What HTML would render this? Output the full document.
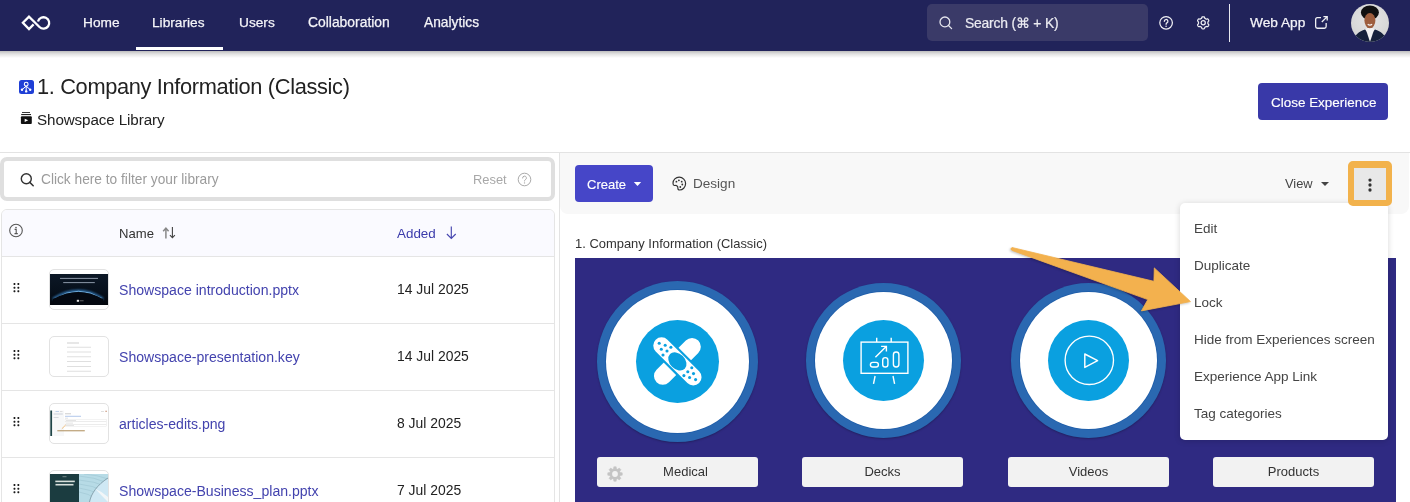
<!DOCTYPE html>
<html><head><meta charset="utf-8"><style>
html,body{margin:0;padding:0;}
body{width:1410px;height:502px;overflow:hidden;position:relative;background:#fff;font-family:"Liberation Sans",sans-serif;}
.t{position:absolute;white-space:nowrap;line-height:1;will-change:transform;}
</style></head><body>
<div style="position:absolute;left:0px;top:0px;width:1410px;height:51px;background:#21235a;"></div>
<div style="position:absolute;left:0px;top:51px;width:1410px;height:7px;background:linear-gradient(rgba(0,0,0,0.26),rgba(0,0,0,0.12) 40%,rgba(0,0,0,0));"></div>
<svg style="position:absolute;left:0px;top:0px;" width="60" height="50" viewBox="0 0 60 50"><path d="M33.6,24.4 L29,29 L22.9,22.8 L29,16.6 L39.47,27.03 A5.7 5.7 0 1 0 37.99,21.52" fill="none" stroke="#fff" stroke-width="2.3" stroke-linejoin="miter"/></svg>
<div class="t" style="left:83.40px;top:16.40px;font-size:13.7px;color:#f4f4f8;-webkit-text-stroke:0.25px #f4f4f8;">Home</div>
<div class="t" style="left:152.20px;top:16.40px;font-size:13.7px;color:#f4f4f8;-webkit-text-stroke:0.25px #f4f4f8;">Libraries</div>
<div class="t" style="left:239.30px;top:16.40px;font-size:13.7px;color:#f4f4f8;-webkit-text-stroke:0.25px #f4f4f8;">Users</div>
<div class="t" style="left:308.10px;top:16.25px;font-size:13.88px;color:#f4f4f8;-webkit-text-stroke:0.25px #f4f4f8;">Collaboration</div>
<div class="t" style="left:423.60px;top:16.36px;font-size:13.75px;color:#f4f4f8;-webkit-text-stroke:0.25px #f4f4f8;">Analytics</div>
<div style="position:absolute;left:136px;top:46.8px;width:87px;height:3.5px;background:#fff;"></div>
<div style="position:absolute;left:927px;top:4.3px;width:220.6px;height:36.6px;background:#3a3a68;border-radius:5px;"></div>
<svg style="position:absolute;left:937px;top:14px;" width="18" height="18" viewBox="0 0 18 18"><circle cx="7.9" cy="7.9" r="4.9" fill="none" stroke="#e6e6ee" stroke-width="1.3"/><line x1="11.5" y1="11.5" x2="14.6" y2="14.6" stroke="#e6e6ee" stroke-width="1.3" stroke-linecap="round"/></svg>
<div class="t" style="left:964.60px;top:16.63px;font-size:13.9px;color:#ececf2;-webkit-text-stroke:0.2px #ececf2;letter-spacing:-0.2px;">Search (⌘ + K)</div>
<svg style="position:absolute;left:1157px;top:14px;" width="18" height="18" viewBox="0 0 18 18"><circle cx="9.1" cy="8.8" r="6.3" fill="none" stroke="#f0f0f4" stroke-width="1.25"/><path d="M7.3,7.3 A1.8 1.8 0 1 1 9.9,8.9 C9.3,9.2 9.1,9.6 9.1,10.3" fill="none" stroke="#f0f0f4" stroke-width="1.25" stroke-linecap="round"/><circle cx="9.1" cy="12.2" r="0.8" fill="#f0f0f4"/></svg>
<svg style="position:absolute;left:1194px;top:14px;" width="18" height="18" viewBox="0 0 18 18"><path d="M9.20,2.75 L9.36,2.75 L9.52,2.76 L9.67,2.78 L9.83,2.80 L9.99,2.83 L10.14,2.89 L10.28,2.98 L10.41,3.12 L10.51,3.33 L10.59,3.61 L10.66,3.88 L10.73,4.10 L10.81,4.25 L10.91,4.35 L11.01,4.43 L11.12,4.49 L11.23,4.55 L11.34,4.61 L11.44,4.67 L11.55,4.73 L11.66,4.79 L11.76,4.86 L11.87,4.92 L11.97,4.98 L12.08,5.04 L12.20,5.10 L12.34,5.13 L12.51,5.13 L12.73,5.08 L13.00,5.00 L13.28,4.93 L13.52,4.91 L13.70,4.95 L13.85,5.03 L13.97,5.14 L14.08,5.25 L14.18,5.38 L14.27,5.51 L14.36,5.64 L14.44,5.78 L14.52,5.91 L14.59,6.05 L14.65,6.20 L14.71,6.35 L14.76,6.50 L14.79,6.66 L14.78,6.82 L14.72,7.01 L14.59,7.20 L14.39,7.41 L14.19,7.60 L14.03,7.77 L13.95,7.92 L13.91,8.05 L13.89,8.18 L13.89,8.31 L13.89,8.43 L13.90,8.55 L13.90,8.68 L13.90,8.80 L13.90,8.92 L13.90,9.05 L13.89,9.17 L13.89,9.29 L13.89,9.42 L13.91,9.55 L13.95,9.68 L14.03,9.83 L14.19,10.00 L14.39,10.19 L14.59,10.40 L14.72,10.59 L14.78,10.78 L14.79,10.94 L14.76,11.10 L14.71,11.25 L14.65,11.40 L14.59,11.55 L14.52,11.69 L14.44,11.82 L14.36,11.96 L14.27,12.09 L14.18,12.22 L14.08,12.35 L13.97,12.46 L13.85,12.57 L13.70,12.65 L13.52,12.69 L13.28,12.67 L13.00,12.60 L12.73,12.52 L12.51,12.47 L12.34,12.47 L12.20,12.50 L12.08,12.56 L11.97,12.62 L11.87,12.68 L11.76,12.74 L11.66,12.81 L11.55,12.87 L11.44,12.93 L11.34,12.99 L11.23,13.05 L11.12,13.11 L11.01,13.17 L10.91,13.25 L10.81,13.35 L10.73,13.50 L10.66,13.72 L10.59,13.99 L10.51,14.27 L10.41,14.48 L10.28,14.62 L10.14,14.71 L9.99,14.77 L9.83,14.80 L9.67,14.82 L9.52,14.84 L9.36,14.85 L9.20,14.85 L9.04,14.85 L8.88,14.84 L8.73,14.82 L8.57,14.80 L8.41,14.77 L8.26,14.71 L8.12,14.62 L7.99,14.48 L7.89,14.27 L7.81,13.99 L7.74,13.72 L7.67,13.50 L7.59,13.35 L7.49,13.25 L7.39,13.17 L7.28,13.11 L7.17,13.05 L7.06,12.99 L6.96,12.93 L6.85,12.87 L6.74,12.81 L6.64,12.74 L6.53,12.68 L6.43,12.62 L6.32,12.56 L6.20,12.50 L6.06,12.47 L5.89,12.47 L5.67,12.52 L5.40,12.60 L5.12,12.67 L4.88,12.69 L4.70,12.65 L4.55,12.57 L4.43,12.46 L4.32,12.35 L4.22,12.22 L4.13,12.09 L4.04,11.96 L3.96,11.83 L3.88,11.69 L3.81,11.55 L3.75,11.40 L3.69,11.25 L3.64,11.10 L3.61,10.94 L3.62,10.78 L3.68,10.59 L3.81,10.40 L4.01,10.19 L4.21,10.00 L4.37,9.83 L4.45,9.68 L4.49,9.55 L4.51,9.42 L4.51,9.29 L4.51,9.17 L4.50,9.05 L4.50,8.92 L4.50,8.80 L4.50,8.68 L4.50,8.55 L4.51,8.43 L4.51,8.31 L4.51,8.18 L4.49,8.05 L4.45,7.92 L4.37,7.77 L4.21,7.60 L4.01,7.41 L3.81,7.20 L3.68,7.01 L3.62,6.82 L3.61,6.66 L3.64,6.50 L3.69,6.35 L3.75,6.20 L3.81,6.05 L3.88,5.91 L3.96,5.78 L4.04,5.64 L4.13,5.51 L4.22,5.38 L4.32,5.25 L4.43,5.14 L4.55,5.03 L4.70,4.95 L4.88,4.91 L5.12,4.93 L5.40,5.00 L5.67,5.08 L5.89,5.13 L6.06,5.13 L6.20,5.10 L6.32,5.04 L6.43,4.98 L6.53,4.92 L6.64,4.86 L6.74,4.79 L6.85,4.73 L6.96,4.67 L7.06,4.61 L7.17,4.55 L7.28,4.49 L7.39,4.43 L7.49,4.35 L7.59,4.25 L7.67,4.10 L7.74,3.88 L7.81,3.61 L7.89,3.33 L7.99,3.12 L8.12,2.98 L8.26,2.89 L8.41,2.83 L8.57,2.80 L8.73,2.78 L8.88,2.76 L9.04,2.75Z" fill="none" stroke="#f0f0f4" stroke-width="1.25" stroke-linejoin="round"/><circle cx="9.2" cy="8.8" r="2.1" fill="none" stroke="#f0f0f4" stroke-width="1.25"/></svg>
<div style="position:absolute;left:1229px;top:4px;width:1.3px;height:38px;background:#e8e8ef;"></div>
<div class="t" style="left:1250.20px;top:16.40px;font-size:13.7px;color:#f4f4f8;-webkit-text-stroke:0.25px #f4f4f8;">Web App</div>
<svg style="position:absolute;left:1313px;top:14px;" width="18" height="18" viewBox="0 0 18 18"><path d="M8,3.65 H4.4 Q2.65,3.65 2.65,5.4 V12.5 Q2.65,14.25 4.4,14.25 H11.4 Q13.15,14.25 13.15,12.5 V9" fill="none" stroke="#f0f0f4" stroke-width="1.3"/><path d="M8.8,8 L14.2,2.6 M10.4,2.6 H14.2 V6.4" fill="none" stroke="#f0f0f4" stroke-width="1.3"/></svg>
<svg style="position:absolute;left:1351px;top:4px;" width="38" height="38" viewBox="0 0 38 38"><defs><clipPath id="av"><circle cx="19" cy="19" r="19"/></clipPath><radialGradient id="avbg" cx="50%" cy="40%" r="60%"><stop offset="0" stop-color="#e6e6e6"/><stop offset="1" stop-color="#d4d4d4"/></radialGradient></defs>
<g clip-path="url(#av)"><rect width="38" height="38" fill="url(#avbg)"/>
<ellipse cx="18.9" cy="8.6" rx="9" ry="7.2" fill="#111"/>
<rect x="16.4" y="20" width="5" height="7" fill="#8a4e33"/>
<path d="M2,39 C3,31 8,27.5 14,25.5 L19,31 L24,25.5 C30,27.5 35,31 36,39Z" fill="#16213b"/>
<path d="M14.8,25.2 L19,38 L23.2,25.2 L21.5,23.8 L16.5,23.8Z" fill="#f2f2f2"/>
<ellipse cx="18.9" cy="16.6" rx="5.5" ry="7.6" fill="#9e5e3e"/>
<path d="M13.4,12.5 C14,9 16,8.6 18.9,8.6 C21.8,8.6 23.8,9 24.4,12.5 C25.5,9 24,5 18.9,5 C13.8,5 12.3,9 13.4,12.5Z" fill="#111"/>
<path d="M16.7,20.2 Q18.9,22 21.1,20.2" stroke="#f6f2f0" stroke-width="1.2" fill="none"/>
</g></svg>
<div style="position:absolute;left:19px;top:79.5px;width:14.7px;height:14.7px;background:#1f3fd6;border-radius:2.5px;"></div>
<svg style="position:absolute;left:19px;top:79.5px;" width="15" height="15" viewBox="0 0 15 15"><circle cx="7.2" cy="4.2" r="1.9" fill="none" stroke="#fff" stroke-width="1.1"/><path d="M7.2,6.1 L3,9.7 M7.2,6.1 V11.4 M7.2,6.1 L11.2,9.7" stroke="#fff" stroke-width="1" fill="none"/><circle cx="3" cy="9.8" r="1.2" fill="#fff"/><circle cx="11.2" cy="9.8" r="1.2" fill="#fff"/><circle cx="7.2" cy="11.4" r="1.2" fill="#fff"/></svg>
<div class="t" style="left:36.80px;top:76.15px;font-size:21.8px;color:#222;letter-spacing:-0.34px;">1. Company Information (Classic)</div>
<svg style="position:absolute;left:20px;top:111px;" width="13" height="14" viewBox="0 0 13 14"><rect x="2" y="1.05" width="8" height="0.9" fill="#222"/><rect x="1.2" y="3" width="9.8" height="1.1" fill="#222"/><rect x="0.9" y="5.2" width="10.9" height="7.8" rx="1" fill="#111"/><path d="M4.7,7.7 L8.2,9.35 L4.7,11Z" fill="#fff"/></svg>
<div class="t" style="left:36.70px;top:111.83px;font-size:15.2px;color:#222;letter-spacing:-0.1px;">Showspace Library</div>
<div style="position:absolute;left:1258px;top:83px;width:130px;height:37px;background:#3939a8;border-radius:4px;"></div>
<div class="t" style="left:1270.60px;top:96.01px;font-size:13.46px;color:#fff;-webkit-text-stroke:0.15px #fff;">Close Experience</div>
<div style="position:absolute;left:0px;top:152px;width:1410px;height:1px;background:#e3e3e3;"></div>
<div style="position:absolute;left:0px;top:157px;width:555px;height:44px;box-sizing:border-box;border:4px solid #dfdfdf;border-radius:7px;background:#fff;"></div>
<svg style="position:absolute;left:18px;top:171px;" width="18" height="18" viewBox="0 0 18 18"><circle cx="8.3" cy="7.8" r="5" fill="none" stroke="#333" stroke-width="1.4"/><line x1="11.8" y1="11.4" x2="15.2" y2="14.8" stroke="#333" stroke-width="1.5" stroke-linecap="round"/></svg>
<div class="t" style="left:41.20px;top:172.88px;font-size:13.73px;color:#9b9b9b;">Click here to filter your library</div>
<div class="t" style="left:473.40px;top:173.58px;font-size:12.9px;color:#a8a8a8;">Reset</div>
<svg style="position:absolute;left:516px;top:171px;" width="17" height="17" viewBox="0 0 17 17"><circle cx="8.5" cy="8.5" r="6.3" fill="none" stroke="#aaa" stroke-width="1"/><path d="M6.6,7 A1.9 1.9 0 1 1 9.3,8.7 C8.8,9 8.5,9.4 8.5,10" fill="none" stroke="#aaa" stroke-width="1" stroke-linecap="round"/><circle cx="8.5" cy="11.9" r="0.7" fill="#aaa"/></svg>
<div style="position:absolute;left:1px;top:209px;width:554px;height:320px;box-sizing:border-box;border:1px solid #e5e5e5;border-radius:6px 6px 0 0;background:#fff;"></div>
<div style="position:absolute;left:2px;top:210px;width:552px;height:46px;background:#fafaff;border-radius:5px 5px 0 0;"></div>
<div style="position:absolute;left:1px;top:256px;width:554px;height:1px;background:#e5e5e5;"></div>
<svg style="position:absolute;left:8px;top:223px;" width="16" height="16" viewBox="0 0 16 16"><circle cx="8" cy="7.5" r="6.3" fill="none" stroke="#555" stroke-width="1.1"/><path d="M6.6,6.4 H8.2 V10.6 M6.5,10.6 H9.8" fill="none" stroke="#555" stroke-width="1.1"/><circle cx="8" cy="4.6" r="0.8" fill="#555"/></svg>
<div class="t" style="left:119.40px;top:226.91px;font-size:13.1px;color:#333;">Name</div>
<svg style="position:absolute;left:162px;top:225px;" width="16" height="16" viewBox="0 0 16 16"><path d="M3.9,13.4 V4 M1.2,6.3 L3.9,3.1 L6.6,6.3" fill="none" stroke="#888" stroke-width="1.5"/><path d="M10.4,2 V12.5 M7.9,10.1 L10.4,12.6 L12.9,10.1" fill="none" stroke="#444" stroke-width="1.1"/></svg>
<div class="t" style="left:397.40px;top:226.96px;font-size:13.4px;color:#3a3aab;">Added</div>
<svg style="position:absolute;left:443px;top:224px;" width="16" height="16" viewBox="0 0 16 16"><path d="M8.3,2.5 V14.4 M3.9,10 L8.3,14.4 L12.7,10" fill="none" stroke="#4646b0" stroke-width="1.15"/></svg>
<svg style="position:absolute;left:12.5px;top:282px;" width="8" height="13" viewBox="0 0 8 13"><rect x="0.51" y="1.01" width="1.9" height="1.9" rx="0.6" fill="#1a1a1a"/><rect x="0.51" y="4.75" width="1.9" height="1.9" rx="0.6" fill="#1a1a1a"/><rect x="0.51" y="8.25" width="1.9" height="1.9" rx="0.6" fill="#1a1a1a"/><rect x="4.40" y="1.01" width="1.9" height="1.9" rx="0.6" fill="#1a1a1a"/><rect x="4.40" y="4.75" width="1.9" height="1.9" rx="0.6" fill="#1a1a1a"/><rect x="4.40" y="8.25" width="1.9" height="1.9" rx="0.6" fill="#1a1a1a"/></svg>
<div style="position:absolute;left:49px;top:269px;width:60px;height:41px;box-sizing:border-box;border:1px solid #e2e2e2;border-radius:5px;background:#fff;overflow:hidden;"></div>
<div class="t" style="left:119.20px;top:283.08px;font-size:14.08px;color:#4343ae;">Showspace introduction.pptx</div>
<div class="t" style="left:396.80px;top:283.23px;font-size:13.9px;color:#222;">14 Jul 2025</div>
<div style="position:absolute;left:1px;top:323px;width:554px;height:1px;background:#e5e5e5;"></div>
<svg style="position:absolute;left:12.5px;top:349px;" width="8" height="13" viewBox="0 0 8 13"><rect x="0.51" y="1.01" width="1.9" height="1.9" rx="0.6" fill="#1a1a1a"/><rect x="0.51" y="4.75" width="1.9" height="1.9" rx="0.6" fill="#1a1a1a"/><rect x="0.51" y="8.25" width="1.9" height="1.9" rx="0.6" fill="#1a1a1a"/><rect x="4.40" y="1.01" width="1.9" height="1.9" rx="0.6" fill="#1a1a1a"/><rect x="4.40" y="4.75" width="1.9" height="1.9" rx="0.6" fill="#1a1a1a"/><rect x="4.40" y="8.25" width="1.9" height="1.9" rx="0.6" fill="#1a1a1a"/></svg>
<div style="position:absolute;left:49px;top:336px;width:60px;height:41px;box-sizing:border-box;border:1px solid #e2e2e2;border-radius:5px;background:#fff;overflow:hidden;"></div>
<div class="t" style="left:119.20px;top:350.08px;font-size:14.08px;color:#4343ae;">Showspace-presentation.key</div>
<div class="t" style="left:396.80px;top:350.23px;font-size:13.9px;color:#222;">14 Jul 2025</div>
<div style="position:absolute;left:1px;top:390px;width:554px;height:1px;background:#e5e5e5;"></div>
<svg style="position:absolute;left:12.5px;top:416px;" width="8" height="13" viewBox="0 0 8 13"><rect x="0.51" y="1.01" width="1.9" height="1.9" rx="0.6" fill="#1a1a1a"/><rect x="0.51" y="4.75" width="1.9" height="1.9" rx="0.6" fill="#1a1a1a"/><rect x="0.51" y="8.25" width="1.9" height="1.9" rx="0.6" fill="#1a1a1a"/><rect x="4.40" y="1.01" width="1.9" height="1.9" rx="0.6" fill="#1a1a1a"/><rect x="4.40" y="4.75" width="1.9" height="1.9" rx="0.6" fill="#1a1a1a"/><rect x="4.40" y="8.25" width="1.9" height="1.9" rx="0.6" fill="#1a1a1a"/></svg>
<div style="position:absolute;left:49px;top:403px;width:60px;height:41px;box-sizing:border-box;border:1px solid #e2e2e2;border-radius:5px;background:#fff;overflow:hidden;"></div>
<div class="t" style="left:119.20px;top:417.08px;font-size:14.08px;color:#4343ae;">articles-edits.png</div>
<div class="t" style="left:396.80px;top:417.23px;font-size:13.9px;color:#222;">8 Jul 2025</div>
<div style="position:absolute;left:1px;top:457px;width:554px;height:1px;background:#e5e5e5;"></div>
<svg style="position:absolute;left:12.5px;top:483px;" width="8" height="13" viewBox="0 0 8 13"><rect x="0.51" y="1.01" width="1.9" height="1.9" rx="0.6" fill="#1a1a1a"/><rect x="0.51" y="4.75" width="1.9" height="1.9" rx="0.6" fill="#1a1a1a"/><rect x="0.51" y="8.25" width="1.9" height="1.9" rx="0.6" fill="#1a1a1a"/><rect x="4.40" y="1.01" width="1.9" height="1.9" rx="0.6" fill="#1a1a1a"/><rect x="4.40" y="4.75" width="1.9" height="1.9" rx="0.6" fill="#1a1a1a"/><rect x="4.40" y="8.25" width="1.9" height="1.9" rx="0.6" fill="#1a1a1a"/></svg>
<div style="position:absolute;left:49px;top:470px;width:60px;height:41px;box-sizing:border-box;border:1px solid #e2e2e2;border-radius:5px;background:#fff;overflow:hidden;"></div>
<div class="t" style="left:119.20px;top:484.08px;font-size:14.08px;color:#4343ae;">Showspace-Business_plan.pptx</div>
<div class="t" style="left:396.80px;top:484.23px;font-size:13.9px;color:#222;">7 Jul 2025</div>
<svg style="position:absolute;left:50px;top:274px;" width="58" height="31.2" viewBox="0 0 58 31.2"><defs><linearGradient id="spg" x1="0" y1="0" x2="0" y2="1"><stop offset="0" stop-color="#0c1826"/><stop offset="0.55" stop-color="#07101c"/><stop offset="1" stop-color="#03060c"/></linearGradient>
<radialGradient id="glow" cx="50%" cy="100%" r="70%"><stop offset="0" stop-color="#2a6aa0" stop-opacity="0.55"/><stop offset="1" stop-color="#2a6aa0" stop-opacity="0"/></radialGradient>
<filter id="bl" x="-20%" y="-50%" width="140%" height="200%"><feGaussianBlur stdDeviation="0.9"/></filter></defs>
<rect width="58" height="31.2" fill="url(#spg)"/>
<path d="M3,25 Q28.5,9 53,25" fill="none" stroke="#3d8fd8" stroke-width="2.6" opacity="0.8" filter="url(#bl)"/>
<path d="M5,24.5 Q28.5,10 52,24.5" fill="none" stroke="#8fd0ff" stroke-width="0.7"/>
<path d="M3,25 Q28.5,11 53,25 L53,31.2 L3,31.2Z" fill="#040810"/>
<rect x="10" y="3.9" width="38" height="0.9" fill="#9aa6b6"/><rect x="13.2" y="8.2" width="31.6" height="0.9" fill="#9aa6b6"/>
<rect x="26.8" y="25.8" width="2.2" height="2" fill="#e0e0e0"/><rect x="29.6" y="26.5" width="4" height="0.7" fill="#888"/></svg>
<svg style="position:absolute;left:50px;top:337px;" width="58" height="40" viewBox="0 0 58 40"><rect x="17" y="5.5" width="12" height="1" fill="#d0d0d0"/><rect x="17" y="9.8" width="24" height="0.8" fill="#d8d8d8"/><rect x="17" y="14.6" width="24" height="0.8" fill="#d8d8d8"/><rect x="17" y="19.4" width="24" height="0.8" fill="#d8d8d8"/><rect x="17" y="24.2" width="24" height="0.8" fill="#d8d8d8"/><rect x="17" y="29.0" width="24" height="0.8" fill="#d8d8d8"/><rect x="17" y="33.8" width="24" height="0.8" fill="#d8d8d8"/></svg>
<svg style="position:absolute;left:50px;top:404px;" width="58" height="39" viewBox="0 0 58 39"><rect x="0.3" y="6.5" width="1.8" height="25.5" fill="#1f4548"/><rect x="3.5" y="6.5" width="10.5" height="25.5" fill="#f7f8f9"/>
<rect x="5.5" y="7" width="3.5" height="0.6" fill="#9ab8e0"/><rect x="10" y="7" width="2.5" height="0.6" fill="#ccc"/><rect x="51" y="7" width="3" height="0.6" fill="#ccc"/><rect x="55.5" y="6.7" width="1.2" height="1.2" fill="#c08060"/>
<rect x="3.6" y="9.2" width="9.2" height="1.6" fill="#dde0e6"/><rect x="3.6" y="13" width="5" height="0.7" fill="#c8ccd2"/>
<rect x="15" y="9.5" width="6" height="0.7" fill="#b8b8b8"/><rect x="15" y="11.8" width="16" height="0.9" fill="#a8c0e8"/><rect x="15" y="13.8" width="3" height="0.6" fill="#ccc"/>
<g fill="none" stroke="#e2e2e2" stroke-width="0.4"><rect x="15" y="15.2" width="41.5" height="2.6"/><rect x="15" y="17.8" width="41.5" height="2.4"/><rect x="15" y="20.2" width="41.5" height="2.4"/></g>
<rect x="16" y="16.3" width="10" height="0.5" fill="#c8c8c8"/><rect x="16" y="18.8" width="7" height="0.5" fill="#c8c8c8"/><rect x="16" y="21.1" width="8" height="0.5" fill="#c8c8c8"/>
<path d="M11.8,24.8 L15.7,21" stroke="#eaa448" stroke-width="0.7"/>
<rect x="7.3" y="26.2" width="27.5" height="1.1" fill="#a88650" opacity="0.85"/></svg>
<svg style="position:absolute;left:50px;top:474px;" width="58" height="28" viewBox="0 0 58 28"><rect width="29" height="28" fill="#1b3c40"/><rect x="29" width="29" height="28" fill="#b7dbe6"/>
<g stroke="#95bfcc" stroke-width="0.45" fill="none"><path d="M29,2 Q44,3 58,9"/><path d="M29,6 Q44,7 58,13"/><path d="M29,10 Q42,11 56,18"/><path d="M29,14 Q40,15 52,22"/><path d="M29,18 Q38,19 48,26"/><path d="M34,0 Q48,1 58,5"/></g>
<path d="M39.5,28 C41,20 47,11 58,4 L58,28Z" fill="#cfe8f4"/>
<path d="M39.5,28 C41,20 47,11 58,4" fill="none" stroke="#4d6470" stroke-width="0.5"/>
<path d="M45.5,15 Q52,17.5 58,23 L58,28 Q51,21 45.5,15Z" fill="#f2f6f8"/>
<rect x="5.3" y="6.6" width="19.5" height="1.6" fill="#d8e0dc"/><rect x="5.5" y="9.9" width="18" height="1.6" fill="#d8e0dc"/><rect x="12.5" y="2.6" width="4" height="0.5" fill="#c8d0cc"/></svg>
<div style="position:absolute;left:559px;top:152px;width:1px;height:350px;background:#e3e3e3;"></div>
<div style="position:absolute;left:560px;top:153px;width:849px;height:60.6px;background:#f8f8f8;border-radius:0 0 8px 8px;"></div>
<div style="position:absolute;left:575px;top:165px;width:78px;height:37px;background:#4646c8;border-radius:4px;"></div>
<div class="t" style="left:586.60px;top:177.60px;font-size:13.0px;color:#fff;-webkit-text-stroke:0.15px #fff;">Create</div>
<svg style="position:absolute;left:633px;top:181px;" width="9" height="6" viewBox="0 0 9 6"><path d="M0.8,1 L8.2,1 L4.5,5Z" fill="#fff"/></svg>
<svg style="position:absolute;left:671px;top:176px;" width="16" height="16" viewBox="0 0 16 16"><path d="M2,7.2 C2,3.8 4.8,1.2 8.2,1.2 C11.8,1.2 14.6,4 14.6,7.6 C14.6,11.4 11.6,14 8.6,14 C7.5,14 6.8,13.2 6.9,12.2 C7,11 6.8,10 5.6,9.6 C4.8,9.3 4,9.6 3.4,9.5 C2.5,9.3 2,8.4 2,7.2Z" fill="none" stroke="#333" stroke-width="1.2"/><circle cx="5.4" cy="5.7" r="0.9" fill="#333"/><circle cx="7.9" cy="4.3" r="0.9" fill="#333"/><circle cx="10.7" cy="5.7" r="0.9" fill="#333"/><circle cx="11.3" cy="8.5" r="0.9" fill="#333"/><circle cx="9.3" cy="11" r="0.9" fill="#333"/></svg>
<div class="t" style="left:692.70px;top:177.13px;font-size:13.55px;color:#555;">Design</div>
<div class="t" style="left:1284.90px;top:177.81px;font-size:12.87px;color:#444;">View</div>
<svg style="position:absolute;left:1320px;top:181px;" width="10" height="6" viewBox="0 0 10 6"><path d="M1,1 L9,1 L5,5Z" fill="#444"/></svg>
<div class="t" style="left:575.40px;top:238.44px;font-size:12.95px;color:#333;">1. Company Information (Classic)</div>
<div style="position:absolute;left:574.5px;top:258px;width:821.3px;height:250px;background:#2f2a82;"></div>
<div style="position:absolute;left:596.9px;top:280.79999999999995px;width:161.2px;height:161.2px;border-radius:50%;background:#2a68b1;box-shadow:0 1px 2px rgba(0,0,0,0.25);"></div>
<div style="position:absolute;left:606.0px;top:289.9px;width:143px;height:143px;border-radius:50%;background:#fff;box-shadow:0 0 0 0.8px #1d5ca8;"></div>
<div style="position:absolute;left:636.0px;top:319.7px;width:83px;height:83px;border-radius:50%;background:#0aa0e0;"></div>
<div style="position:absolute;left:597px;top:457px;width:161px;height:30px;background:#f2f2f2;border-radius:3px;"></div>
<div style="position:absolute;left:805.6px;top:283.1px;width:155px;height:155px;border-radius:50%;background:#2a68b1;box-shadow:0 1px 2px rgba(0,0,0,0.25);"></div>
<div style="position:absolute;left:814.6px;top:292.1px;width:137px;height:137px;border-radius:50%;background:#fff;box-shadow:0 0 0 0.8px #1d5ca8;"></div>
<div style="position:absolute;left:842.6px;top:320.0px;width:81px;height:81px;border-radius:50%;background:#0aa0e0;"></div>
<div style="position:absolute;left:802px;top:457px;width:161px;height:30px;background:#f2f2f2;border-radius:3px;"></div>
<div style="position:absolute;left:1011.2px;top:283.1px;width:155px;height:155px;border-radius:50%;background:#2a68b1;box-shadow:0 1px 2px rgba(0,0,0,0.25);"></div>
<div style="position:absolute;left:1020.2px;top:292.1px;width:137px;height:137px;border-radius:50%;background:#fff;box-shadow:0 0 0 0.8px #1d5ca8;"></div>
<div style="position:absolute;left:1048.2px;top:320.0px;width:81px;height:81px;border-radius:50%;background:#0aa0e0;"></div>
<div style="position:absolute;left:1007.5px;top:457px;width:161px;height:30px;background:#f2f2f2;border-radius:3px;"></div>
<div style="position:absolute;left:1216.8px;top:283.1px;width:155px;height:155px;border-radius:50%;background:#2a68b1;box-shadow:0 1px 2px rgba(0,0,0,0.25);"></div>
<div style="position:absolute;left:1225.8px;top:292.1px;width:137px;height:137px;border-radius:50%;background:#fff;box-shadow:0 0 0 0.8px #1d5ca8;"></div>
<div style="position:absolute;left:1253.8px;top:320.0px;width:81px;height:81px;border-radius:50%;background:#0aa0e0;"></div>
<div style="position:absolute;left:1213px;top:457px;width:161px;height:30px;background:#f2f2f2;border-radius:3px;"></div>
<svg style="position:absolute;left:647px;top:331px;" width="61" height="61" viewBox="0 0 61 61"><g transform="rotate(-45 30.4 30.4)"><rect x="0.9" y="21.6" width="59" height="17.6" rx="8.8" fill="#fff"/></g>
<g transform="rotate(45 30.4 30.4)"><rect x="-0.3" y="22.1" width="61.4" height="16.6" rx="8.3" fill="#fff" stroke="#0aa0e0" stroke-width="4.4" paint-order="stroke"/>
<ellipse cx="30.4" cy="30.4" rx="10.4" ry="7.6" fill="#0aa0e0"/></g><circle cx="12.2" cy="12.2" r="1.55" fill="#0aa0e0"/><circle cx="18.2" cy="14.3" r="1.55" fill="#0aa0e0"/><circle cx="23.9" cy="16.2" r="1.55" fill="#0aa0e0"/><circle cx="14.3" cy="18.2" r="1.55" fill="#0aa0e0"/><circle cx="20" cy="20" r="1.55" fill="#0aa0e0"/><circle cx="16" cy="24" r="1.55" fill="#0aa0e0"/><circle cx="48.6" cy="48.6" r="1.55" fill="#0aa0e0"/><circle cx="42.6" cy="46.5" r="1.55" fill="#0aa0e0"/><circle cx="36.9" cy="44.6" r="1.55" fill="#0aa0e0"/><circle cx="46.5" cy="42.6" r="1.55" fill="#0aa0e0"/><circle cx="40.8" cy="40.8" r="1.55" fill="#0aa0e0"/><circle cx="44.8" cy="36.8" r="1.55" fill="#0aa0e0"/></svg>
<svg style="position:absolute;left:853px;top:330px;" width="60" height="60" viewBox="0 0 60 60"><g fill="none" stroke="#fff" stroke-width="1.4"><rect x="8.1" y="12.1" width="46.8" height="31.2"/><path d="M23.7,7.8 V12 M38.2,7.8 V12 M22.1,46 L20.5,53.8 M40,46 L41.6,53.8"/><rect x="17.4" y="32.4" width="8" height="4.6" rx="2.3"/><rect x="29.7" y="27.6" width="5.2" height="9.4" rx="2.6"/><rect x="40.4" y="22" width="5.5" height="15" rx="2.7"/><path d="M22.4,27.2 L33.2,16.4 M28.1,16.4 H33.4 V21.6"/></g></svg>
<svg style="position:absolute;left:1059px;top:331px;" width="60" height="60" viewBox="0 0 60 60"><circle cx="30.3" cy="29.3" r="24.2" fill="none" stroke="#fff" stroke-width="1.35"/><path d="M25.8,23 L38.6,29.7 L25.8,36.4Z" fill="none" stroke="#fff" stroke-width="1.45" stroke-linejoin="round"/></svg>
<div class="t" style="left:605.4px;width:161px;text-align:center;top:465.00px;font-size:13px;color:#333;">Medical</div>
<div class="t" style="left:802px;width:161px;text-align:center;top:465.00px;font-size:13px;color:#333;">Decks</div>
<div class="t" style="left:1007.5px;width:161px;text-align:center;top:465.00px;font-size:13px;color:#333;">Videos</div>
<div class="t" style="left:1213px;width:161px;text-align:center;top:465.00px;font-size:13px;color:#333;">Products</div>
<svg style="position:absolute;left:606px;top:465px;" width="18" height="18" viewBox="0 0 18 18"><path d="M14.20,7.56 L16.21,7.85 L16.21,10.15 L14.20,10.44 L13.70,11.66 L14.91,13.29 L13.29,14.91 L11.66,13.70 L10.44,14.20 L10.15,16.21 L7.85,16.21 L7.56,14.20 L6.34,13.70 L4.71,14.91 L3.09,13.29 L4.30,11.66 L3.80,10.44 L1.79,10.15 L1.79,7.85 L3.80,7.56 L4.30,6.34 L3.09,4.71 L4.71,3.09 L6.34,4.30 L7.56,3.80 L7.85,1.79 L10.15,1.79 L10.44,3.80 L11.66,4.30 L13.29,3.09 L14.91,4.71 L13.70,6.34Z" fill="#c4c4c4" stroke="#c4c4c4" stroke-width="0.6" stroke-linejoin="round"/><circle cx="9" cy="9" r="2.9" fill="#f2f2f2"/></svg>
<div style="position:absolute;left:1180px;top:203px;width:208px;height:237px;background:#fff;border-radius:5px;box-shadow:0 1px 6px rgba(0,0,0,0.16);"></div>
<div class="t" style="left:1193.80px;top:221.97px;font-size:13.5px;color:#444;">Edit</div>
<div class="t" style="left:1193.80px;top:259.27px;font-size:13.5px;color:#444;">Duplicate</div>
<div class="t" style="left:1193.80px;top:296.27px;font-size:13.5px;color:#444;">Lock</div>
<div class="t" style="left:1193.80px;top:333.27px;font-size:13.5px;color:#444;">Hide from Experiences screen</div>
<div class="t" style="left:1193.80px;top:370.27px;font-size:13.5px;color:#444;">Experience App Link</div>
<div class="t" style="left:1193.80px;top:407.47px;font-size:13.5px;color:#444;">Tag categories</div>
<div style="position:absolute;left:1348px;top:161px;width:44px;height:45px;box-sizing:border-box;border:6.3px solid #f2b24c;border-top-width:7px;border-radius:5px;background:#e8e8e8;"></div>
<svg style="position:absolute;left:1366px;top:176px;" width="8" height="18" viewBox="0 0 8 18"><circle cx="4" cy="4.1" r="1.65" fill="#333"/><circle cx="4" cy="9" r="1.65" fill="#333"/><circle cx="4" cy="14" r="1.65" fill="#333"/></svg>
<svg style="position:absolute;left:990px;top:230px;" width="220" height="100" viewBox="0 0 220 100"><path d="M22,17.5 L163.9,51.3 L164.3,37.9 L200.5,71.6 L151.4,80.9 L157.8,69.6 L22,20.4 Q19.6,18.95 22,17.5Z" fill="#f3b14e" stroke="#f3b14e" stroke-width="0.8" stroke-linejoin="round" style="filter:drop-shadow(-0.5px 1.5px 1.2px rgba(0,0,0,0.22))"/></svg>
</body></html>
